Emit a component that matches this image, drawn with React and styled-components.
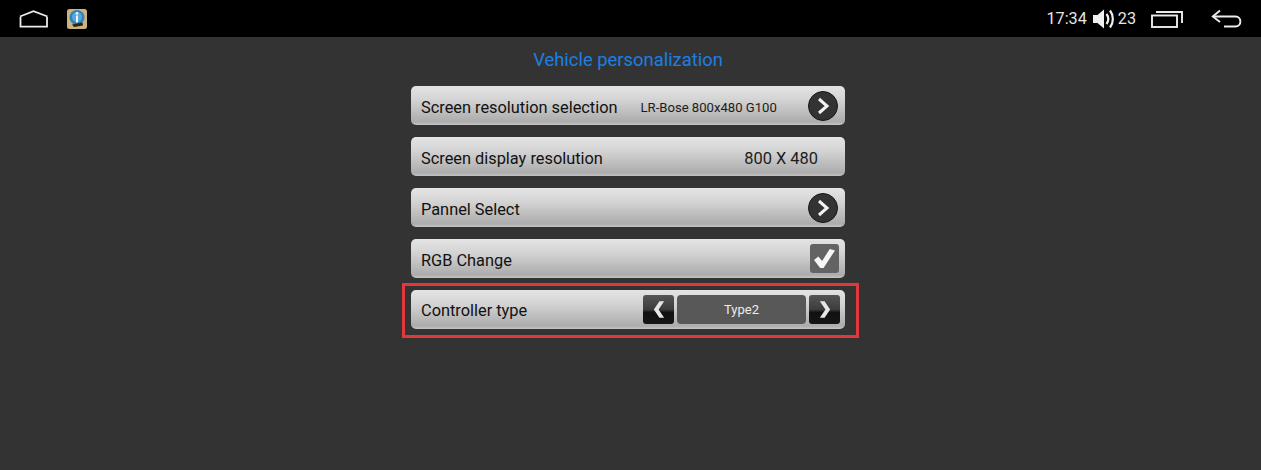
import React from 'react';
import styled, { createGlobalStyle } from 'styled-components';

const GlobalStyle = createGlobalStyle`
  html, body {
    margin: 0;
    padding: 0;
    background: #333333;
    font-family: Roboto, "Liberation Sans", sans-serif;
  }
`;

const HomeIcon = () => (
  <svg width="30" height="18" viewBox="0 0 30 18" fill="none" stroke="#ececec" strokeWidth="1.8">
    <path d="M1 6.5 14.5 1.2 28.5 6.5" />
    <path d="M1.5 7v9.6h26.5V7" />
  </svg>
);

const AppIcon = () => (
  <svg width="20" height="20" viewBox="0 0 20 20">
    <rect width="20" height="20" rx="2.5" fill="#c9b47c" />
    <circle cx="10" cy="8.5" r="7.5" fill="#2f83bd" />
    <circle cx="10" cy="8" r="5" fill="#5aa6d8" />
    <rect x="9" y="6.5" width="2" height="7" fill="#f2f2f2" />
    <circle cx="10" cy="4.4" r="1.3" fill="#f2f2f2" />
    <path d="M5 15.5 15.5 13.5 16 16.5 7 18Z" fill="#2b2413" />
  </svg>
);

const SpeakerIcon = () => (
  <svg width="21" height="20" viewBox="0 0 21 20" fill="none">
    <path d="M0 6h4.5L11 .5v19L4.5 14H0Z" fill="#f0f0f0" />
    <path d="M13.5 5c2.2 3 2.2 7 0 10" stroke="#f0f0f0" strokeWidth="2.2" />
    <path d="M17 1.5c3.8 5 3.8 12 0 17" stroke="#f0f0f0" strokeWidth="2.2" />
  </svg>
);

const RecentsIcon = () => (
  <svg width="32" height="18" viewBox="0 0 32 18" fill="none" stroke="#ececec" strokeWidth="1.9">
    <rect x="1" y="5.5" width="25" height="11.5" />
    <path d="M5 2h26v11" />
  </svg>
);

const BackIcon = () => (
  <svg width="31" height="20" viewBox="0 0 31 20" fill="none" stroke="#ececec" strokeWidth="1.9">
    <path d="M9 1.5 1.8 7.5 9 13" />
    <path d="M2 7.5h22.5c6.5 0 6.5 10 0 10H13" />
  </svg>
);

const CheckIcon = () => (
  <svg width="23" height="21" viewBox="0 0 24 22">
    <path d="M1 12.5 5.5 9l4 4.5L17.5 1 23 2.5 11 21H7.5Z" fill="#f6f6f6" />
  </svg>
);

const RoundChevron = () => (
  <svg width="14" height="18" viewBox="0 0 14 18" fill="none" stroke="#f2f2f2" strokeWidth="3">
    <path d="M3 2 11 9 3 16" />
  </svg>
);

const StepChevron = ({ left }) => (
  <svg width="12" height="19" viewBox="0 0 14 21">
    <path
      d={left ? 'M13 1 6.5 10.5 13 20H7.5L1 10.5 7.5 1Z' : 'M1 1 7.5 10.5 1 20H6.5L13 10.5 6.5 1Z'}
      fill="#e6e6e6"
    />
  </svg>
);

export default function App() {
  return (
    <Page>
      <GlobalStyle />
      <StatusBar>
        <StatusGroup>
          <HomeIcon />
          <AppSlot>
            <AppIcon />
          </AppSlot>
        </StatusGroup>
        <StatusGroup>
          <Clock>17:34</Clock>
          <SpeakerSlot>
            <SpeakerIcon />
          </SpeakerSlot>
          <Clock>23</Clock>
          <RecentSlot>
            <RecentsIcon />
          </RecentSlot>
          <BackSlot>
            <BackIcon />
          </BackSlot>
        </StatusGroup>
      </StatusBar>

      <Content>
        <Title>Vehicle personalization</Title>
        <List>
          <Row>
            <Label $drop={3}>Screen resolution selection</Label>
            <SmallValue>LR-Bose 800x480 G100</SmallValue>
            <RoundButton>
              <RoundChevron />
            </RoundButton>
          </Row>
          <Row>
            <Label $drop={3}>Screen display resolution</Label>
            <Value>800 X 480</Value>
          </Row>
          <Row>
            <Label $drop={3}>Pannel Select</Label>
            <RoundButton>
              <RoundChevron />
            </RoundButton>
          </Row>
          <Row>
            <Label $drop={3}>RGB Change</Label>
            <CheckBox>
              <CheckIcon />
            </CheckBox>
          </Row>
          <Row $highlight>
            <Label $drop={2}>Controller type</Label>
            <Stepper>
              <StepButton>
                <StepChevron left />
              </StepButton>
              <StepValue>Type2</StepValue>
              <StepButton>
                <StepChevron />
              </StepButton>
            </Stepper>
          </Row>
        </List>
      </Content>
    </Page>
  );
}

const Page = styled.div`
  width: 1261px;
  height: 470px;
  overflow: hidden;
  background: #333333;
`;

const StatusBar = styled.header`
  height: 37px;
  background: #000;
  display: flex;
  align-items: center;
  justify-content: space-between;
  padding: 0 19px;
  box-sizing: border-box;
`;

const StatusGroup = styled.div`
  display: flex;
  align-items: center;
`;

const AppSlot = styled.div`
  display: flex;
  margin-left: 18px;
`;

const SpeakerSlot = styled.div`
  display: flex;
  margin: 0 4px 0 6px;
`;

const RecentSlot = styled.div`
  display: flex;
  margin-left: 15px;
`;

const BackSlot = styled.div`
  display: flex;
  margin-left: 28px;
`;

const Clock = styled.span`
  color: #e6e6e6;
  font-size: 16.2px;
`;

const Content = styled.main`
  width: 434px;
  margin-left: 411px;
  display: flex;
  flex-direction: column;
  align-items: center;
`;

const Title = styled.h1`
  margin: 11px 0 0;
  height: 38px;
  font-size: 18.4px;
  font-weight: 400;
  line-height: 24px;
  color: #1b7fe3;
  white-space: nowrap;
`;

const List = styled.div`
  width: 100%;
  display: flex;
  flex-direction: column;
  gap: 12px;
`;

const Row = styled.div`
  position: relative;
  height: 39px;
  box-sizing: border-box;
  display: flex;
  align-items: center;
  padding: 0 5px 0 10px;
  border-radius: 5px;
  background: linear-gradient(#e4e4e4 0%, #d4d4d4 35%, #acacac 92%, #c4c4c4 100%);

  ${({ $highlight }) =>
    $highlight &&
    `
    &::after {
      content: '';
      position: absolute;
      left: -9px;
      top: -7px;
      width: 457px;
      height: 55px;
      box-sizing: border-box;
      border: 3px solid #e2383c;
      pointer-events: none;
    }
  `}
`;

const Label = styled.span`
  margin-top: ${({ $drop }) => $drop}px;
  font-size: 16.35px;
  color: #111;
  white-space: nowrap;
`;

const SmallValue = styled.span`
  margin: 3px 0 0 23px;
  flex: 1;
  font-size: 13.1px;
  color: #1c1c1c;
  white-space: nowrap;
`;

const Value = styled.span`
  margin: 3px 22px 0 auto;
  font-size: 16.4px;
  color: #1c1c1c;
  white-space: nowrap;
`;

const RoundButton = styled.div`
  margin-left: auto;
  margin-right: 2px;
  width: 30px;
  height: 30px;
  box-sizing: border-box;
  border-radius: 50%;
  background: #333;
  border: 1px solid #161616;
  display: flex;
  align-items: center;
  justify-content: center;
`;

const CheckBox = styled.div`
  margin-left: auto;
  margin-right: 1px;
  width: 29px;
  height: 29px;
  border-radius: 3px;
  background: #636363;
  display: flex;
  align-items: center;
  justify-content: center;
`;

const Stepper = styled.div`
  margin-left: auto;
  display: flex;
  gap: 3px;
`;

const StepButton = styled.div`
  width: 31px;
  height: 29px;
  border-radius: 3px;
  background: linear-gradient(#565656 0%, #3c3c3c 50%, #111 60%, #151515 100%);
  display: flex;
  align-items: center;
  justify-content: center;
`;

const StepValue = styled.div`
  width: 129px;
  height: 29px;
  border-radius: 4px;
  background: #585858;
  color: #ececec;
  font-size: 13px;
  display: flex;
  align-items: center;
  justify-content: center;
`;
